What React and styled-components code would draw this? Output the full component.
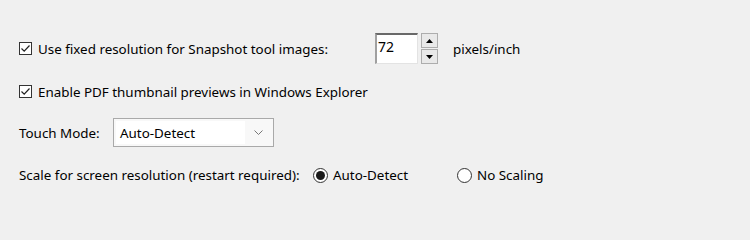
import React from 'react';
import styled, { createGlobalStyle } from 'styled-components';

const GlobalStyle = createGlobalStyle`
  html, body {
    margin: 0;
    padding: 0;
    background: #f0f0f0;
  }
  body {
    font-family: "Noto Sans", "Liberation Sans", sans-serif;
    font-size: 13.4px;
    color: #000;
  }
`;

const Panel = styled.div`
  width: 750px;
  height: 231px;
  box-sizing: border-box;
  padding: 33px 0 0 19px;
  display: flex;
  flex-direction: column;
`;

const Row = styled.div`
  display: flex;
  align-items: center;
  height: ${(p) => p.h}px;
  margin-top: ${(p) => p.gap || 0}px;
`;

const CheckLabel = styled.label`
  display: flex;
  align-items: center;
  gap: 6px;
  width: ${(p) => (p.w ? `${p.w}px` : 'auto')};
  white-space: nowrap;
`;

const CheckBox = styled.span`
  width: 13px;
  height: 13px;
  box-sizing: border-box;
  border: 1px solid #333;
  background: #fff;
  display: flex;
  align-items: center;
  justify-content: center;
  flex-shrink: 0;
`;

const FieldLabel = styled.span`
  width: ${(p) => p.w}px;
  white-space: nowrap;
`;

const SpinText = styled.div`
  width: 43px;
  height: 31px;
  box-sizing: border-box;
  background: #fff;
  border-top: 2px solid #696969;
  border-left: 2px solid #a0a0a0;
  border-right: 1px solid #e3e3e3;
  border-bottom: 1px solid #e3e3e3;
  padding: 0 0 0 1px;
  line-height: 24px;
  font-size: 14px;
`;

const SpinButtons = styled.div`
  display: flex;
  flex-direction: column;
  gap: 1px;
  margin-left: 3px;
  height: 31px;
`;

const SpinButton = styled.div`
  width: 17px;
  height: 15px;
  box-sizing: border-box;
  border: 1px solid #adadad;
  background: #e9e9e9;
  display: flex;
  align-items: center;
  justify-content: center;
`;

const Unit = styled.span`
  margin-left: 15px;
`;

const Select = styled.div`
  width: 161px;
  height: 29px;
  box-sizing: border-box;
  border: 1px solid #a9a9a9;
  background: #f8f8f8;
  padding: 2px;
  display: flex;
  align-items: center;
`;

const SelectValue = styled.div`
  flex: 1;
  height: 100%;
  background: #fff;
  display: flex;
  align-items: center;
  padding-left: 4px;
`;

const SelectArrow = styled.div`
  width: 26px;
  display: flex;
  align-items: center;
  justify-content: center;
`;

const RadioOption = styled.label`
  display: flex;
  align-items: center;
  gap: 5px;
  width: ${(p) => (p.w ? `${p.w}px` : 'auto')};
  white-space: nowrap;
`;

const RadioCircle = styled.span`
  width: 15px;
  height: 15px;
  box-sizing: border-box;
  border-radius: 50%;
  border: 1px solid #333;
  background: #fff;
  display: flex;
  align-items: center;
  justify-content: center;
  flex-shrink: 0;

  &::after {
    content: '';
    display: ${(p) => (p.checked ? 'block' : 'none')};
    width: 9px;
    height: 9px;
    border-radius: 50%;
    background: #1a1a1a;
  }
`;

const Tick = () => (
  <svg width="11" height="11" viewBox="0 0 11 11">
    <path d="M1.5 5.5 L4.2 8.2 L9.5 2.5" fill="none" stroke="#222" strokeWidth="1.2" />
  </svg>
);

const Triangle = ({ down }) => (
  <svg width="7" height="4" viewBox="0 0 7 4">
    <path d={down ? 'M0 0 H7 L3.5 4 Z' : 'M0 4 H7 L3.5 0 Z'} fill="#000" />
  </svg>
);

const Chevron = () => (
  <svg width="9" height="5" viewBox="0 0 9 5">
    <path d="M0.5 0.5 L4.5 4.5 L8.5 0.5" fill="none" stroke="#777" strokeWidth="1" />
  </svg>
);

export default function App() {
  return (
    <>
      <GlobalStyle />
      <Panel>
        <Row h={31}>
          <CheckLabel w={356}>
            <CheckBox><Tick /></CheckBox>
            Use fixed resolution for Snapshot tool images:
          </CheckLabel>
          <SpinText>72</SpinText>
          <SpinButtons>
            <SpinButton><Triangle /></SpinButton>
            <SpinButton><Triangle down /></SpinButton>
          </SpinButtons>
          <Unit>pixels/inch</Unit>
        </Row>

        <Row h={23} gap={16}>
          <CheckLabel>
            <CheckBox><Tick /></CheckBox>
            Enable PDF thumbnail previews in Windows Explorer
          </CheckLabel>
        </Row>

        <Row h={29} gap={15}>
          <FieldLabel w={94}>Touch Mode:</FieldLabel>
          <Select>
            <SelectValue>Auto-Detect</SelectValue>
            <SelectArrow><Chevron /></SelectArrow>
          </Select>
        </Row>

        <Row h={20} gap={18}>
          <FieldLabel w={294}>Scale for screen resolution (restart required):</FieldLabel>
          <RadioOption w={144}>
            <RadioCircle checked />
            Auto-Detect
          </RadioOption>
          <RadioOption>
            <RadioCircle />
            No Scaling
          </RadioOption>
        </Row>
      </Panel>
    </>
  );
}
